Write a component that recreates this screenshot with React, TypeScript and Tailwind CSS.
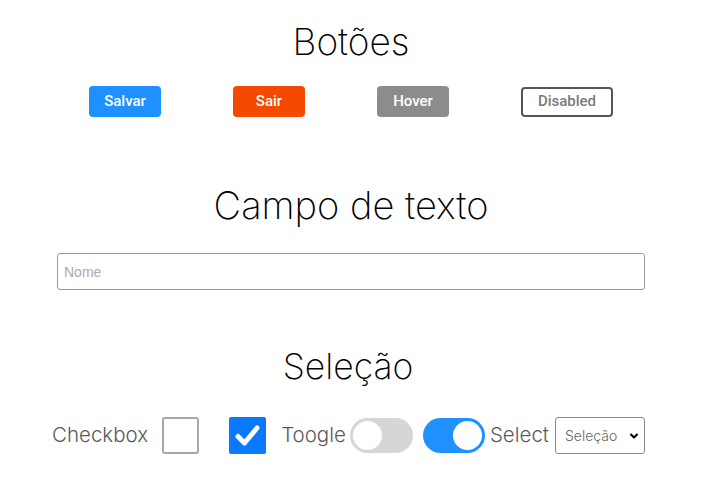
import React from "react";

export default function App() {
  return (
    <div className="min-h-[492px] w-[702px] bg-white flex flex-col items-center font-['Inter',sans-serif]">
      <h1 className="mt-[20px] text-[37px] leading-[44px] font-extralight text-black">Botões</h1>
      <div className="mt-[22px] flex items-center gap-[72px] font-['Roboto',Arial,sans-serif] text-[15px] font-medium">
        <button className="h-[31px] w-[72px] rounded-[4px] bg-[#1e90ff] text-white">Salvar</button>
        <button className="h-[31px] w-[72px] rounded-[4px] bg-[#f54900] text-white">Sair</button>
        <button className="h-[31px] w-[72px] rounded-[4px] bg-[#8c8c8c] text-white">Hover</button>
        <button className="h-[30px] w-[92px] rounded-[4px] border-2 border-[#555] bg-white text-[#7a7a7a]">Disabled</button>
      </div>
      <h2 className="mt-[65px] text-[38px] leading-[46px] font-extralight text-black">Campo de texto</h2>
      <input
        className="mt-[25px] h-[37px] w-[588px] rounded-[3px] border border-[#999] px-[6px] font-['Liberation_Sans',Arial,sans-serif] text-[14px] outline-none placeholder:text-[#aaa]"
        placeholder="Nome"
      />
      <h2 className="mt-[55px] ml-[-6px] text-[35.5px] leading-[44px] font-extralight text-black">Seleção</h2>
      <div className="mt-[28px] ml-[-5px] flex items-center text-[20.5px] font-light text-[#5a5a5a]">
        <span>Checkbox</span>
        <div className="ml-[14px] h-[37px] w-[37px] rounded-[3px] border-2 border-[#a8a8a8] bg-white" />
        <div className="ml-[30px] flex h-[37px] w-[37px] items-center justify-center rounded-[2px] bg-[#0a78ff]">
          <svg width="37" height="37" viewBox="0 0 37 37">
            <path d="M9 19.5 L15.5 26 L28 11" fill="none" stroke="white" strokeWidth="5" strokeLinecap="round" strokeLinejoin="round" />
          </svg>
        </div>
        <span className="ml-[15px]">Toogle</span>
        <div className="ml-[4px] flex h-[35px] w-[63px] items-center rounded-full bg-[#d6d6d6] px-[3px]">
          <div className="h-[29px] w-[29px] rounded-full bg-white" />
        </div>
        <div className="ml-[10px] flex h-[35px] w-[62px] items-center justify-end rounded-full bg-[#1e90ff] px-[3px]">
          <div className="h-[29px] w-[29px] rounded-full bg-white" />
        </div>
        <span className="ml-[5px]">Select</span>
        <div className="ml-[6px] flex h-[37px] w-[90px] items-center justify-between rounded-[3px] border border-[#888] bg-white pl-[9px] pr-[5px]">
          <span className="text-[14px] font-light text-[#666]">Seleção</span>
          <svg width="10" height="10" viewBox="0 0 10 10">
            <path d="M2 3.5 L5 6.5 L8 3.5" fill="none" stroke="black" strokeWidth="2" strokeLinecap="round" strokeLinejoin="round" />
          </svg>
        </div>
      </div>
    </div>
  );
}
